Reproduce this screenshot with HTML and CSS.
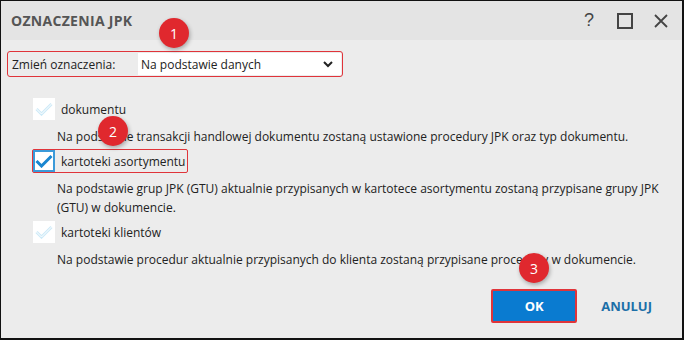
FILE: index.html
```html
<!DOCTYPE html>
<html>
<head>
  <title>Oznaczenia JPK</title>
  <meta name="viewport" content="width=device-width, initial-scale=1.0">
  <link rel="stylesheet" href="styles.css">
</head>
<body>
  <div class="window">
    <div class="titlebar">
      <span class="title">OZNACZENIA JPK</span>
      <div class="controls">
        <span class="ctl help">?</span>
        <span class="ctl"><span class="maximize"></span></span>
        <span class="ctl">
          <svg width="14" height="14" viewBox="0 0 14 14"><path d="M1 1 L13 13 M13 1 L1 13" stroke="#444" stroke-width="1.8" fill="none"/></svg>
        </span>
      </div>
    </div>

    <div class="content">
      <div class="select-row">
        <label for="mode">Zmień oznaczenia:</label>
        <div class="select" id="mode">
          <span>Na podstawie danych</span>
          <svg width="10" height="7" viewBox="0 0 10 7"><path d="M1 1 L5 5 L9 1" stroke="#222" stroke-width="2" fill="none"/></svg>
        </div>
      </div>

      <div class="options">
        <div class="option">
          <div class="check-row">
            <span class="box">
              <svg width="18" height="14" viewBox="0 0 18 14"><path d="M1.5 7 L6.5 12 L16.5 2" stroke="#cdeaf8" stroke-width="3" fill="none"/><path d="M1.5 7 L6.5 12 L16.5 2" stroke="#fff" stroke-width="1" fill="none"/></svg>
            </span>
            <span class="check-label">dokumentu</span>
          </div>
          <p class="desc">Na podstawie transakcji handlowej dokumentu zostaną ustawione procedury JPK oraz typ dokumentu.</p>
        </div>

        <div class="option">
          <div class="check-row marked">
            <span class="box checked">
              <svg width="18" height="14" viewBox="0 0 18 14"><path d="M1.5 7 L6.5 12 L16.5 2" stroke="#1a86d0" stroke-width="3" fill="none"/></svg>
            </span>
            <span class="check-label">kartoteki asortymentu</span>
          </div>
          <p class="desc">Na podstawie grup JPK (GTU) aktualnie przypisanych w kartotece asortymentu zostaną przypisane grupy JPK (GTU) w dokumencie.</p>
        </div>

        <div class="option">
          <div class="check-row">
            <span class="box">
              <svg width="18" height="14" viewBox="0 0 18 14"><path d="M1.5 7 L6.5 12 L16.5 2" stroke="#cdeaf8" stroke-width="3" fill="none"/><path d="M1.5 7 L6.5 12 L16.5 2" stroke="#fff" stroke-width="1" fill="none"/></svg>
            </span>
            <span class="check-label">kartoteki klientów</span>
          </div>
          <p class="desc">Na podstawie procedur aktualnie przypisanych do klienta zostaną przypisane procedury w dokumencie.</p>
        </div>
      </div>

      <div class="buttons">
        <button type="button" class="btn-ok">OK</button>
        <button type="button" class="btn-cancel">ANULUJ</button>
      </div>
    </div>

    <span class="badge b1">1</span>
    <span class="badge b2">2</span>
    <span class="badge b3">3</span>
  </div>
</body>
</html>
```

FILE: styles.css
```css
body {
  margin: 0;
  font-family: 'Open Sans', 'Noto Sans', sans-serif;
  color: #222;
}

.window {
  position: relative;
  width: 684px;
  height: 340px;
  box-sizing: border-box;
  border: 1px solid #111;
  border-bottom-width: 2px;
  border-right-width: 2px;
  background-color: #ececec;
  display: flex;
  flex-direction: column;
  overflow: hidden;
}

.titlebar {
  flex-shrink: 0;
  height: 39px;
  background-color: #e4e4e4;
  display: flex;
  align-items: center;
  justify-content: space-between;
  padding-left: 10px;
}

.title {
  font-size: 14px;
  font-weight: 700;
  color: #555;
  letter-spacing: 0.3px;
}

.controls {
  display: flex;
  align-items: center;
  gap: 18px;
  padding-right: 12px;
}

.ctl {
  width: 18px;
  display: flex;
  justify-content: center;
  align-items: center;
}

.help {
  font-size: 18px;
  color: #444;
  font-family: 'Liberation Sans', sans-serif;
}

.maximize {
  width: 12px;
  height: 12px;
  border: 2px solid #444;
}

.content {
  flex: 1;
  padding: 11px 0 0 6px;
  display: flex;
  flex-direction: column;
}

.select-row {
  width: 333px;
  height: 24px;
  border: 1px solid #e0343a;
  border-radius: 3px;
  display: flex;
  align-items: center;
  padding-right: 1px;
  font-size: 12px;
}

.select-row label {
  width: 126px;
  padding-left: 4px;
}

.select {
  flex: 1;
  height: 22px;
  background-color: #fff;
  display: flex;
  align-items: center;
  justify-content: space-between;
  padding: 0 8px 0 3px;
}

.options {
  margin-top: 20px;
  padding-left: 25px;
}

.check-row {
  display: inline-flex;
  align-items: center;
  gap: 6px;
  border: 1px solid transparent;
  border-radius: 2px;
  padding-right: 2px;
  font-size: 12px;
}

.check-row.marked {
  border-color: #e0343a;
}

.box {
  width: 22px;
  height: 22px;
  box-sizing: border-box;
  background-color: #fff;
  display: flex;
  align-items: center;
  justify-content: center;
}

.box.checked {
  border: 2px solid #3b9ad9;
}

.desc {
  margin: 6px 0 3px 25px;
  font-size: 12px;
  line-height: 19px;
  color: #222;
}

.buttons {
  display: flex;
  align-items: center;
  justify-content: flex-end;
  gap: 24px;
  margin-top: 17px;
  padding-right: 30px;
}

.btn-ok {
  width: 86px;
  height: 34px;
  background-color: #0a7bd0;
  border: 2px solid #e0343a;
  border-radius: 2px;
  color: #fff;
  font-family: inherit;
  font-weight: 700;
  font-size: 13px;
}

.btn-cancel {
  background: transparent;
  border: none;
  padding: 0;
  color: #1c6fa8;
  font-family: inherit;
  font-weight: 700;
  font-size: 13px;
}

.badge {
  position: absolute;
  width: 30px;
  height: 30px;
  border-radius: 50%;
  background-color: #e0282e;
  color: #fff;
  font-size: 14px;
  display: flex;
  align-items: center;
  justify-content: center;
  box-shadow: 1px 2px 4px rgba(0, 0, 0, 0.3);
}

.b1 { left: 158px; top: 17px; }
.b2 { left: 97px; top: 115px; }
.b3 { left: 518px; top: 252px; }
```
